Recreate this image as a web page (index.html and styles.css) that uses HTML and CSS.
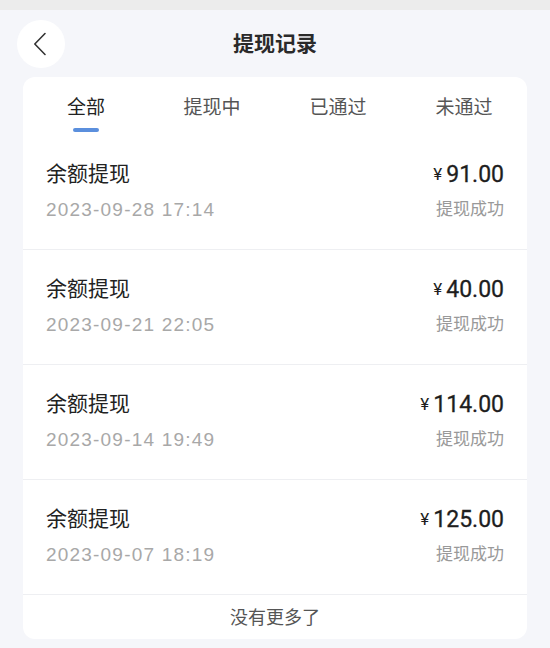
FILE: index.html
```html
<!DOCTYPE html>
<html lang="zh-CN">
<head>
	<meta charset="UTF-8"/>
	<title>提现记录</title>
	<link rel="stylesheet" href="styles.css">
</head>
<body>
	<div class="topbar"></div>
	<div class="header">
		<div class="back">
			<svg width="14" height="24" viewBox="0 0 14 24"><path d="M12 1.5 L1.8 12 L12 22.5" fill="none" stroke="#333" stroke-width="1.6" stroke-linecap="round" stroke-linejoin="round"/></svg>
		</div>
		<div class="title">提现记录</div>
	</div>
	<div class="card">
		<div class="tabs">
			<div class="tab active">全部<span class="bar"></span></div>
			<div class="tab">提现中</div>
			<div class="tab">已通过</div>
			<div class="tab">未通过</div>
		</div>
		<div class="row">
			<div class="line">
				<span class="name">余额提现</span>
				<span class="money"><i>¥</i>91.00</span>
			</div>
			<div class="line sub">
				<span class="time">2023-09-28 17:14</span>
				<span class="state">提现成功</span>
			</div>
		</div>
		<div class="row">
			<div class="line">
				<span class="name">余额提现</span>
				<span class="money"><i>¥</i>40.00</span>
			</div>
			<div class="line sub">
				<span class="time">2023-09-21 22:05</span>
				<span class="state">提现成功</span>
			</div>
		</div>
		<div class="row">
			<div class="line">
				<span class="name">余额提现</span>
				<span class="money"><i>¥</i>114.00</span>
			</div>
			<div class="line sub">
				<span class="time">2023-09-14 19:49</span>
				<span class="state">提现成功</span>
			</div>
		</div>
		<div class="row">
			<div class="line">
				<span class="name">余额提现</span>
				<span class="money"><i>¥</i>125.00</span>
			</div>
			<div class="line sub">
				<span class="time">2023-09-07 18:19</span>
				<span class="state">提现成功</span>
			</div>
		</div>
		<div class="more">没有更多了</div>
	</div>
</body>
</html>
```

FILE: styles.css
```css
* { margin: 0; padding: 0; box-sizing: border-box; }
body {
	background-color: #f5f6fa;
	font-family: "Liberation Sans", "Noto Sans CJK SC", sans-serif;
	color: #222;
}
.topbar {
	height: 10px;
	background-color: #ececec;
}
.header {
	position: relative;
	height: 67px;
	display: flex;
	align-items: flex-start;
	justify-content: center;
	padding-top: 21px;
}
.back {
	position: absolute;
	left: 17px;
	top: 10px;
	width: 48px;
	height: 48px;
	border-radius: 50%;
	background-color: #fff;
	display: flex;
	align-items: center;
	justify-content: center;
	padding-right: 3px;
}
.title {
	font-size: 21px;
	font-weight: bold;
	color: #2a2a2a;
	line-height: 26px;
}
.card {
	margin: 0 23px;
	background-color: #fff;
	border-radius: 12px;
	overflow: hidden;
}
.tabs {
	display: flex;
	height: 58px;
}
.tab {
	flex: 1;
	position: relative;
	text-align: center;
	font-size: 19px;
	color: #555;
	line-height: 24px;
	padding-top: 19px;
}
.tab.active { color: #222; }
.bar {
	position: absolute;
	left: 50%;
	top: 51px;
	width: 26px;
	height: 4px;
	margin-left: -13px;
	border-radius: 2px;
	background-color: #5b8fdd;
}
.row {
	height: 115px;
	padding: 25px 23px 0 23px;
	border-bottom: 1px solid #eeeff2;
}
.line {
	display: flex;
	justify-content: space-between;
	align-items: center;
	height: 24px;
}
.line.sub { margin-top: 14px; }
.name {
	font-size: 21px;
	color: #222;
}
.money {
	font-family: Roboto, "Liberation Sans", sans-serif;
	font-size: 23px;
	color: #1e1e1e;
	position: relative;
	top: 2px;
	-webkit-text-stroke: 0.3px #1e1e1e;
}
.money i {
	font-style: normal;
	font-size: 17px;
	margin-right: 4px;
	position: relative;
	top: -2px;
	-webkit-text-stroke: 0;
}
.time {
	font-size: 19px;
	letter-spacing: 1.2px;
	color: #a8a8a8;
}
.state {
	font-size: 17px;
	color: #999;
	position: relative;
	top: -3px;
}
.more {
	height: 44px;
	line-height: 46px;
	text-align: center;
	font-size: 18px;
	color: #555;
}
```
